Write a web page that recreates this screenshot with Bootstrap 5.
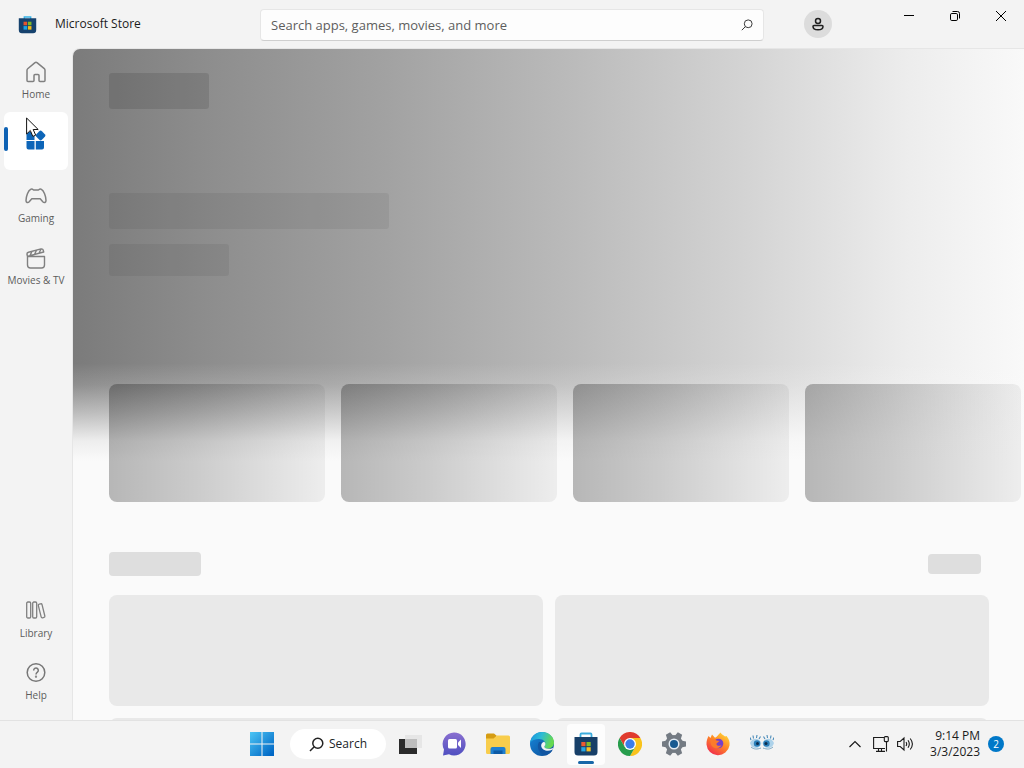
<!DOCTYPE html>
<html lang="en">
<head>
<meta charset="utf-8">
<meta name="viewport" content="width=device-width, initial-scale=1">
<title>Microsoft Store</title>
<link href="https://cdn.jsdelivr.net/npm/bootstrap@5.3.0/dist/css/bootstrap.min.css" rel="stylesheet">
<style>
  body { font-family: "Open Sans", "Noto Sans", sans-serif; background: #f3f3f3; color: #1b1b1b; font-size: 12px; line-height: 16px; }
  button { color: inherit; }
  svg { display: block; flex: none; }
  .title-bar { height: 48px; }
  .brand { width: 260px; padding-left: 18px; gap: 18px; }
  .search-box { height: 32px; margin-top: 9px; background: #fdfdfd; border: 1px solid #e6e6e6; border-bottom-color: #cfcfcf; border-radius: 4px; padding: 0 10px; }
  .search-box input { font-size: 13px; color: #5d5d5d; outline: 0; }
  .search-box input::placeholder { color: #5d5d5d; opacity: 1; }
  .avatar { width: 28px; height: 28px; margin: 10px 54px 0 40px; background: #dcdcdc; }
  .win-btn { width: 46px; height: 32px; }
  .side { width: 72px; padding: 2px 4px 11px; gap: 4px; }
  .side-item { height: 58px; padding: 11px 0 0; gap: 4px; font-size: 10px; line-height: 14px; color: #5c5c5c; white-space: nowrap; border-radius: 6px; }
  .side-item.active { background: #fff; padding-top: 17px; color: #0b67b8; }
  .side-item.active::before { content: ""; position: absolute; left: 0; top: 15px; width: 4px; height: 24px; border-radius: 2px; background: #0f62b4; }
  .pointer { position: absolute; left: 22px; top: 5px; }
  .content-pane { background: #fafafa; border: 1px solid #e6e6e6; border-width: 1px 0 0 1px; border-top-left-radius: 8px; }
  .hero { padding: 24px 0 0 36px; background:
      linear-gradient(to bottom, rgba(250,250,250,0) 314px, rgba(250,250,250,.16) 336px, rgba(250,250,250,.5) 363px, rgba(250,250,250,.9) 392px, #fafafa 412px),
      linear-gradient(to right, #7b7b7b, #8d8d8d 14%, #a2a2a2 33%, #bababa 52%, #d4d4d4 71%, #ededed 88%, #f9f9f9); }
  .ghost { background: rgba(0,0,0,.11); border-radius: 3px; }
  .ghost-tag { width: 100px; height: 36px; margin-bottom: 84px; }
  .ghost-title { width: 280px; height: 36px; margin-bottom: 15px; background: rgba(0,0,0,.06); }
  .ghost-sub { width: 120px; height: 32px; margin-bottom: 108px; background: rgba(0,0,0,.06); }
  .reel { gap: 16px; }
  .reel-card { flex: 0 0 216px; height: 118px; border-radius: 8px; background: linear-gradient(to right, rgba(0,0,0,.27), rgba(0,0,0,.19) 40%, rgba(0,0,0,.05)); }
  .shelf { padding: 50px 35px 0 36px; }
  .shelf-title { width: 92px; height: 24px; border-radius: 4px; background: #dedede; }
  .shelf-link { width: 53px; height: 20px; border-radius: 4px; background: #dedede; margin-right: 8px; }
  .shelf-grid { display: grid; grid-template-columns: 1fr 1fr; gap: 12px; margin-top: 19px; }
  .shelf-card { height: 111px; border-radius: 8px; background: #e9e9e9; }
  .task-bar { height: 48px; padding-bottom: 1px; border-top: 1px solid #e2e2e2; display: grid; grid-template-columns: 1fr auto 1fr; background: #f3f3f3; }
  .task-btn { width: 44px; height: 46px; position: relative; }
  .task-btn.current::before { content: ""; position: absolute; inset: 3px 3px 2px 3px; background: #fdfdfd; border-radius: 4px; }
  .task-btn.current::after { content: ""; position: absolute; left: 14px; bottom: 3px; width: 16px; height: 3px; border-radius: 2px; background: #1767a8; }
  .task-btn svg { position: relative; }
  .task-search { width: 96px; height: 30px; margin: 0 2px 0 6px; background: #fff; gap: 5px; font-size: 12px; line-height: 16px; }
  .tray { padding-right: 20px; }
  .count { width: 16px; height: 16px; font-size: 10px; background: #0078c8; }
</style>
</head>
<body class="vh-100 d-flex flex-column overflow-hidden">

<header class="title-bar d-flex align-items-start flex-shrink-0">
  <div class="brand d-flex align-items-center h-100">
    <svg width="19" height="19" viewBox="0 0 24 24"><path d="M8 5V2.500h8V5" fill="none" stroke="#36b3e8" stroke-width="1.800"/><path d="M1 4h22v15a4 4 0 0 1-4 4H5a4 4 0 0 1-4-4z" fill="#16426e"/><path d="M7 8.500h4.500V13H7z" fill="#e8542e"/><path d="M12.500 8.500H17V13h-4.500z" fill="#80b826"/><path d="M7 14h4.500v4.500H7z" fill="#1ba4e6"/><path d="M12.500 14H17v4.500h-4.500z" fill="#f5bb16"/></svg>
    <span>Microsoft Store</span>
  </div>
  <label class="search-box d-flex align-items-center flex-fill">
    <input class="border-0 bg-transparent flex-fill p-0" type="text" aria-label="Search" placeholder="Search apps, games, movies, and more">
    <svg width="12" height="12" viewBox="0 0 12 12" fill="none" stroke="#3c3c3c"><circle cx="7.200" cy="4.800" r="3.900"/><path d="M4.400 7.600L.8 11.200"/></svg>
  </label>
  <button class="avatar btn p-0 border-0 rounded-circle d-flex align-items-center justify-content-center" aria-label="Account">
    <svg width="14" height="14" viewBox="0 0 14 14" fill="none" stroke="#1f1f1f" stroke-width="1.500"><circle cx="7" cy="4" r="2.500"/><path d="M3 8.500h8a1 1 0 0 1 1 1c0 2.200-2 3.300-5 3.300s-5-1.100-5-3.300a1 1 0 0 1 1-1z"/></svg>
  </button>
  <div class="d-flex">
    <button class="win-btn btn p-0 border-0 d-flex align-items-center justify-content-center" aria-label="Minimize"><svg width="10" height="10" stroke="#000"><path d="M0 4.500h10"/></svg></button>
    <button class="win-btn btn p-0 border-0 d-flex align-items-center justify-content-center" aria-label="Restore"><svg width="10" height="10" viewBox="0 0 10 10" fill="none" stroke="#000"><rect x=".5" y="2.500" width="7" height="7" rx="1.300"/><path d="M2.500 .5H7.500a2 2 0 0 1 2 2v5"/></svg></button>
    <button class="win-btn btn p-0 border-0 d-flex align-items-center justify-content-center" aria-label="Close"><svg width="10" height="10" stroke="#000"><path d="M0 0l10 10M10 0L0 10"/></svg></button>
  </div>
</header>

<div class="d-flex flex-fill overflow-hidden">
  <nav class="side d-flex flex-column flex-shrink-0">
    <button class="side-item btn border-0 d-flex flex-column align-items-center">
      <svg width="22" height="22" viewBox="0 0 22 22" fill="none" stroke="#808080" stroke-width="1.500" stroke-linejoin="round"><path d="M2 9.200a2 2 0 0 1 .7-1.500L9.700 1.900a2 2 0 0 1 2.600 0l7 5.800a2 2 0 0 1 .7 1.500V19.500a1 1 0 0 1-1 1h-4a1 1 0 0 1-1-1v-5a1 1 0 0 0-1-1h-3a1 1 0 0 0-1 1v5a1 1 0 0 1-1 1H3a1 1 0 0 1-1-1z"/></svg>
      <span>Home</span>
    </button>
    <button class="side-item active btn border-0 d-flex flex-column align-items-center position-relative" aria-label="Apps">
      <svg width="22" height="22" viewBox="0 0 22 22" fill="#0d65b8"><path d="M1.500 5a2 2 0 0 1 2-2H9.500v8h-8zM1.500 12h8v8.500h-6a2 2 0 0 1-2-2zM10.800 12H19v6.500a2 2 0 0 1-2 2h-6.200z"/><rect x="11.700" y="2.600" width="7.800" height="7.800" rx="1.800" transform="rotate(45 15.600 6.500)"/></svg>
      <svg class="pointer" width="14" height="21" viewBox="0 0 14 21"><path d="M.6 1v16l3.700-3.500 2.500 5.900 2.900-1.200-2.500-5.700h5z" fill="#fff" stroke="#111"/></svg>
    </button>
    <button class="side-item btn border-0 d-flex flex-column align-items-center">
      <svg width="22" height="22" viewBox="0 0 22 22" fill="none" stroke="#808080" stroke-width="1.500" stroke-linejoin="round"><path d="M5.500 4.500C6.500 3.700 7.600 4.200 8.600 5h4.800c1-.8 2.100-1.300 3.100-.5C18.700 5.200 21 11.500 21 15.500c0 2-1.800 2.800-3.200 1.300l-2.600-3.100H6.800l-2.600 3.100C2.800 18.300 1 17.500 1 15.500c0-4 2.300-10.300 4.500-11z"/></svg>
      <span>Gaming</span>
    </button>
    <button class="side-item btn border-0 d-flex flex-column align-items-center">
      <svg width="22" height="22" viewBox="0 0 22 22" fill="none" stroke="#808080" stroke-width="1.400" stroke-linejoin="round"><path d="M2.500 9.500h17V18a3 3 0 0 1-3 3h-11a3 3 0 0 1-3-3zM2.500 9.500L2 7.500a2 2 0 0 1 1.500-2.300L16 1.900a2 2 0 0 1 2.300 1.400l.4 1.700L3 9.200M5 8.600l2-4.300M9.500 7.500l2-4.300M14 6.300l2-4.300"/></svg>
      <span>Movies &amp; TV</span>
    </button>
    <button class="side-item btn border-0 d-flex flex-column align-items-center mt-auto">
      <svg width="22" height="22" viewBox="0 0 22 22" fill="none" stroke="#808080" stroke-width="1.300"><rect x="1.700" y="2" width="4" height="16" rx="1.200"/><rect x="7.700" y="2" width="4" height="16" rx="1.200"/><rect x="14.700" y="3.800" width="3.800" height="14" rx="1.200" transform="rotate(-14 16.600 10.800)"/></svg>
      <span>Library</span>
    </button>
    <button class="side-item btn border-0 d-flex flex-column align-items-center">
      <svg width="22" height="22" viewBox="0 0 22 22" fill="none" stroke="#777" stroke-width="1.500"><circle cx="11" cy="10.500" r="8.800"/><path d="M8.700 8.500a2.300 2.300 0 1 1 3.700 1.700c-.9.700-1.400 1.200-1.400 2.300"/><circle cx="11" cy="14.700" r=".4"/></svg>
      <span>Help</span>
    </button>
  </nav>

  <main class="content-pane flex-fill overflow-hidden">
    <section class="hero">
      <div class="ghost ghost-tag"></div>
      <div class="ghost ghost-title"></div>
      <div class="ghost ghost-sub"></div>
      <div class="reel d-flex overflow-hidden">
        <div class="reel-card"></div><div class="reel-card"></div><div class="reel-card"></div><div class="reel-card"></div>
      </div>
    </section>
    <section class="shelf">
      <div class="d-flex justify-content-between align-items-center">
        <div class="shelf-title"></div><div class="shelf-link"></div>
      </div>
      <div class="shelf-grid">
        <div class="shelf-card"></div><div class="shelf-card"></div>
        <div class="shelf-card"></div><div class="shelf-card"></div>
      </div>
    </section>
  </main>
</div>

<footer class="task-bar flex-shrink-0">
  <div></div>
  <div class="d-flex align-items-center">
    <button class="task-btn btn p-0 border-0 d-flex align-items-center justify-content-center" aria-label="Start">
      <svg width="24" height="24" viewBox="0 0 24 24"><defs><linearGradient id="win" gradientUnits="userSpaceOnUse" x1="0" y1="0" x2="22" y2="22"><stop stop-color="#4cc6f5"/><stop offset="1" stop-color="#0067c5"/></linearGradient></defs><path fill="url(#win)" d="M0 0h11.500v11.500H0zM12.500 0H24v11.500H12.500zM0 12.500h11.500V24H0zM12.500 12.500H24V24H12.500z"/></svg>
    </button>
    <button class="task-search btn p-0 border-0 rounded-pill d-flex align-items-center justify-content-center">
      <svg width="15" height="15" viewBox="0 0 15 15" fill="none" stroke="#222" stroke-width="1.500"><circle cx="8.800" cy="6.200" r="5"/><path d="M5.200 9.800L1 14"/></svg>
      <span>Search</span>
    </button>
    <button class="task-btn btn p-0 border-0 d-flex align-items-center justify-content-center" aria-label="Task view">
      <svg width="24" height="24" viewBox="0 0 24 24"><path fill="#e6e6e6" d="M7 3h17v13H7z"/><path fill="#2b2b2b" d="M1 7h18v15H1z"/><path fill="#bdbdbd" d="M7 7h12v9H7z"/></svg>
    </button>
    <button class="task-btn btn p-0 border-0 d-flex align-items-center justify-content-center" aria-label="Chat">
      <svg width="24" height="24" viewBox="0 0 24 24"><defs><linearGradient id="chat" x1="0" y1="0" x2="0" y2="1"><stop stop-color="#8a6fd0"/><stop offset="1" stop-color="#4f4fc0"/></linearGradient></defs><path fill="url(#chat)" d="M12 .5a11.500 11.500 0 1 1-5 21.800L1 23.500l1-6A11.500 11.500 0 0 1 12 .5z"/><rect x="6" y="7" width="9" height="9.500" rx="1.500" fill="#fff"/><path fill="#fff" d="M16 10.500l3-3v8.500l-3-3z"/></svg>
    </button>
    <button class="task-btn btn p-0 border-0 d-flex align-items-center justify-content-center" aria-label="File Explorer">
      <svg width="24" height="24" viewBox="0 0 24 24"><path fill="#d59c13" d="M0 3a1.500 1.500 0 0 1 1.500-1.500H8L11 4h-1v5H0z"/><path fill="#f8cd4c" d="M0 6.500h7.500L11 3.500h11.500A1.500 1.500 0 0 1 24 5v15.500a1.500 1.500 0 0 1-1.500 1.500h-21A1.500 1.500 0 0 1 0 20.500z"/><path fill="#1e7fd0" d="M4.500 22v-5a2 2 0 0 1 2-2h11a2 2 0 0 1 2 2v5z"/><path fill="#0d5aa5" d="M7.500 18.500h9V22h-9z"/></svg>
    </button>
    <button class="task-btn btn p-0 border-0 d-flex align-items-center justify-content-center" aria-label="Edge">
      <svg width="24" height="24" viewBox="0 0 24 24"><defs><linearGradient id="edgeTop" x1="0" y1="0" x2="1" y2=".3"><stop stop-color="#1490df"/><stop offset=".5" stop-color="#2dbbd5"/><stop offset="1" stop-color="#66d94f"/></linearGradient><linearGradient id="edgeLow" x1="0" y1="0" x2="1" y2="1"><stop stop-color="#1788dc"/><stop offset="1" stop-color="#0c4b94"/></linearGradient></defs><circle cx="12" cy="12" r="12" fill="url(#edgeLow)"/><path fill="url(#edgeTop)" d="M0 11C1 4.500 6 0 12 0c7 0 12 5 12 10.500 0 4-3 6.200-6.300 6.200-3 0-4-1.200-3.200-2.400C17 10.500 13.500 7 9 7c-4 0-7.500 1.500-9 4z"/><path fill="#1256a2" d="M9 10c-3 5 0 12 7 13.300 3-1 5.200-3 6.500-5.300-5 2.500-11.500 0-11.500-5 0-1 .4-2 1-2.800z"/><path fill="#f3f3f3" d="M14.500 14.300c1.600-2 1-3.800-.5-4.600-2 .8-3 2.300-2.800 4.300.5 4.400 6.500 6 11 3.800.8-.4 1-.6.6-1.800-4 1.800-9.300.5-8.300-1.700z"/></svg>
    </button>
    <button class="task-btn current btn p-0 border-0 d-flex align-items-center justify-content-center" aria-label="Microsoft Store">
      <svg width="24" height="24" viewBox="0 0 24 24"><path d="M6.500 6V2.500a1 1 0 0 1 1-1h9a1 1 0 0 1 1 1V6" fill="none" stroke="#3bacdd" stroke-width="1.800"/><path d="M.5 5h23v15a3.500 3.500 0 0 1-3.500 3.500H4A3.500 3.500 0 0 1 .5 20z" fill="#173f68"/><path d="M7.300 10h4.200v4.200H7.300z" fill="#ed5a31"/><path d="M12.500 10h4.200v4.200h-4.200z" fill="#82bb2a"/><path d="M7.300 15.200h4.200v4.200H7.300z" fill="#26a6e4"/><path d="M12.500 15.200h4.200v4.200h-4.200z" fill="#f8c025"/></svg>
    </button>
    <button class="task-btn btn p-0 border-0 d-flex align-items-center justify-content-center" aria-label="Chrome">
      <svg width="24" height="24" viewBox="0 0 24 24"><path fill="#e03b2e" d="M1.600 6A12 12 0 0 1 22.400 6L12 6.500l-5.200 8.500z"/><path fill="#f9c31c" d="M22.400 6A12 12 0 0 1 12 24l5.200-9L12 6z"/><path fill="#279d4c" d="M1.600 6A12 12 0 0 0 12 24l5.200-9H6.800z"/><circle cx="12" cy="12" r="6" fill="#fff"/><circle cx="12" cy="12" r="4.700" fill="#3b7de9"/></svg>
    </button>
    <button class="task-btn btn p-0 border-0 d-flex align-items-center justify-content-center" aria-label="Settings">
      <svg width="24" height="24" viewBox="0 0 24 24"><g fill="#747b83"><circle cx="12" cy="12" r="9"/><path id="tooth" d="M9.500 0h5l1 5h-7zM9.500 24h5l1-5h-7z" transform="rotate(30 12 12)"/><use href="#tooth" transform="rotate(60 12 12)"/><use href="#tooth" transform="rotate(120 12 12)"/></g><circle cx="12" cy="12" r="5.500" fill="#e4edf5"/><circle cx="12" cy="12" r="4" fill="#175a91"/></svg>
    </button>
    <button class="task-btn btn p-0 border-0 d-flex align-items-center justify-content-center" aria-label="Firefox">
      <svg width="24" height="24" viewBox="0 0 24 24"><defs><linearGradient id="fox" x1=".9" y1="0" x2=".2" y2="1"><stop stop-color="#ffe13a"/><stop offset=".45" stop-color="#ff8b25"/><stop offset="1" stop-color="#f0264f"/></linearGradient></defs><path fill="url(#fox)" d="M2.500 4l2 2L6 2.500l3 3.200C11 5 12 3 14.500 .5c1 2 3 2.500 4.500 4l1.500-.5C23 7 24 10 23.500 13.500A11.600 11.600 0 0 1 .5 12.500C.4 9 1.200 6.500 2.500 4z"/><circle cx="12.500" cy="11.500" r="4.800" fill="#7541c9"/><path fill="#fb7b2c" d="M4 8c3-1.500 5-.5 6.500.5l3 .5-3 2.500c-.5 2.500 3 3 5 1.500-1.500 4.500-9 4-10.500-.5z"/></svg>
    </button>
    <button class="task-btn btn p-0 border-0 d-flex align-items-center justify-content-center" aria-label="Eyes">
      <svg width="24" height="24" viewBox="0 0 24 24"><g fill="none" stroke="#4689b8" stroke-width="1.100"><path d="M1 8L0 5.500M3.500 6.500L3 3.500M6.500 6l.5-3M9 7l1.500-2.500M15 7l-1.500-2.500M17.500 6L17 3M20.500 6.500l.5-3M23 8l1-2.500"/></g><path d="M0 11c2-5.500 9-6 11.500 0-1 6-9.500 7.500-11.500 0zM12.500 11c2.500-6 9.500-5.500 11.500 0-2 7.500-10.500 6-11.500 0z" fill="#add2ea"/><circle cx="7" cy="11.500" r="3.200" fill="#2b7fb9"/><circle cx="16.500" cy="11.500" r="3.200" fill="#2b7fb9"/><circle cx="7.500" cy="11.500" r="1.500" fill="#0c2c4d"/><circle cx="16" cy="11.500" r="1.500" fill="#0c2c4d"/><path d="M1 15c3 2.500 6 2.500 10 1M13 16c4 1.500 7 1.500 10-1" fill="none" stroke="#7ba7c4"/></svg>
    </button>
  </div>
  <div class="tray d-flex align-items-center justify-content-end">
    <svg class="me-2" width="20" height="8" viewBox="0 0 20 8" fill="none" stroke="#1b1b1b" stroke-width="1.200"><path d="M4.500 7L10 1.500 15.500 7"/></svg>
    <svg class="me-2" width="16" height="16" viewBox="0 0 16 16" fill="none" stroke="#1b1b1b" stroke-width="1.100"><path d="M11 1.500H.6v11H12M3 15.400h9M5.500 12.500v3M8.500 12.500v3M13.500 6v9.500"/><rect x="11.300" y=".6" width="4" height="5" rx="1"/></svg>
    <svg width="17" height="16" viewBox="0 0 17 16" fill="none" stroke="#1b1b1b" stroke-width="1.100"><path d="M.6 5.500h2.600L7 2v12l-3.800-3.500H.6zM9 6q1.400 2 0 4M11 4.300q2.600 3.700 0 7.400M13.200 2.500q4.400 5.500 0 11"/></svg>
    <div class="text-end ms-3 me-2">9:14 PM<br>3/3/2023</div>
    <span class="count rounded-circle text-white d-flex align-items-center justify-content-center">2</span>
  </div>
</footer>
<script src="https://cdn.jsdelivr.net/npm/bootstrap@5.3.0/dist/js/bootstrap.bundle.min.js"></script>
</body>
</html>
